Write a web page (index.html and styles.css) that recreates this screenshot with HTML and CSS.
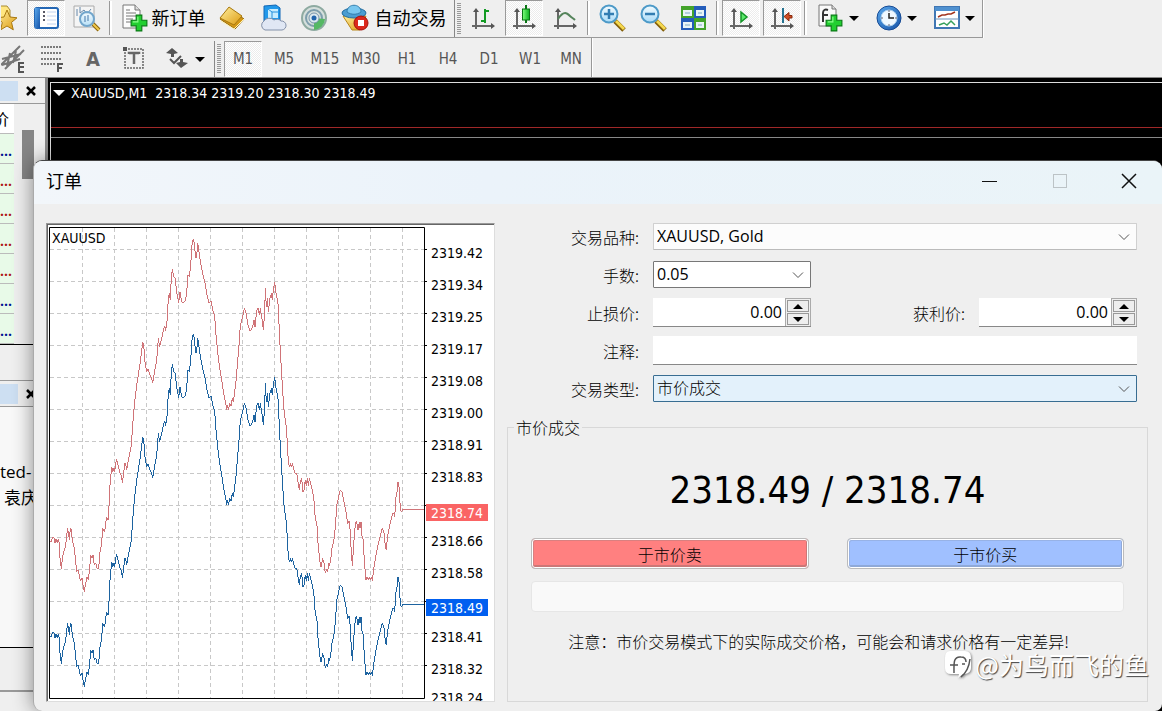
FILE: index.html
```html
<!DOCTYPE html>
<html lang="zh-CN">
<head>
<meta charset="utf-8">
<title>订单</title>
<link rel="stylesheet" href="styles.css">
</head>
<body>
<svg class="defs" aria-hidden="true">
  <defs>
    <linearGradient id="gold" x1="0" y1="0" x2="1" y2="1"><stop offset="0" stop-color="#fff0a0"/><stop offset="1" stop-color="#dd9a10"/></linearGradient>
    <linearGradient id="blue" x1="0" y1="0" x2="1" y2="1"><stop offset="0" stop-color="#5aa8ec"/><stop offset="1" stop-color="#1553a8"/></linearGradient>
    <linearGradient id="glass" x1="0" y1="0" x2="0" y2="1"><stop offset="0" stop-color="#f2fbff"/><stop offset="1" stop-color="#a9dbf8"/></linearGradient>
    <linearGradient id="green" x1="0" y1="0" x2="1" y2="0"><stop offset="0" stop-color="#7dff7d"/><stop offset="1" stop-color="#0cb020"/></linearGradient>
    <symbol id="axes" viewBox="0 0 28 28"><path d="M7 6V25M3 22H24" fill="none" stroke="#666" stroke-width="2"/><path d="M4 8l3-4 3 4zM22 19l4 3-4 3z" fill="#555"/></symbol>
    <symbol id="plus" viewBox="0 0 16 16"><path d="M5.500 1h5v4.500H15v5h-4.500V15h-5v-4.500H1v-5h4.500z" fill="#22cf30" stroke="#087a14"/><path d="M7 2.500V7H2.500" fill="none" stroke="#8dff8d"/></symbol>
    <symbol id="chevron" viewBox="0 0 12 8"><path d="M1 1.500l5 5 5-5" fill="none" stroke="#555"/></symbol>
  </defs>
</svg>

<header class="toolbars">
  <div class="toolbar toolbar-main">
    <button class="tool tool-cut" aria-label="收藏"><svg class="icon" viewBox="0 0 28 28"><path d="M2 2h13l3 4v8H2z" fill="#ffe680" stroke="#a88a30"/><path d="M15 6l3 7 7 .8-5.500 4.600 1.800 7.400L15 22l-6.300 3.800 1.600-7.400L5 13.800l7-.8z" fill="url(#gold)" stroke="#a87810"/></svg></button>
    <button class="tool checked" aria-label="市场报价"><svg class="icon" viewBox="0 0 28 28"><rect x="3" y="4" width="23" height="20" rx="2" fill="#fff" stroke="#2467b4" stroke-width="2"/><path d="M3 4h5v20H3z" fill="url(#blue)"/><path d="M11 8h2M11 12h2M11 16h2" stroke="#223" stroke-width="1.500"/><path d="M15 8h9M15 12h9M15 16h9M15 20h9" stroke="#c4d4ee"/></svg></button>
    <button class="tool" aria-label="数据窗口"><svg class="icon" viewBox="0 0 28 28"><path d="M1 2h20v21H1z" fill="#f5f5f5" stroke="#aaa"/><path d="M4 5v7M7 3v6l4-3 3 4 4-5" fill="none" stroke="#68a"/><path d="M20 20l6 6" stroke="#8a6510" stroke-width="4"/><path d="M20 20l6 6" stroke="#f1c94b" stroke-width="2"/><circle cx="14" cy="15" r="7" fill="url(#glass)" fill-opacity=".8" stroke="#72a6cc" stroke-width="2"/><path d="M12 12v6M15 11v6" stroke="#4779aa"/></svg></button>
    <span class="sep"></span>
    <button class="tool tool-order"><svg class="icon" viewBox="0 0 28 28"><path d="M3 1h12l5 5v18H3z" fill="#fcfcfc" stroke="#777"/><path d="M15 1v5h5" fill="#ddd" stroke="#777"/><path d="M6 6h4M6 9h10M6 12h10M6 15h7M6 18h5" stroke="#777"/><use href="#plus" x="10" y="10" width="18" height="18"/></svg><span>新订单</span></button>
    <button class="tool" aria-label="历史中心"><svg class="icon" viewBox="0 0 28 28"><path d="M2 15L11 4l15 11-9 10z" fill="#d39715" stroke="#94670a"/><path d="M2 14L11 3l13 9-8 9z" fill="url(#gold)" stroke="#a8790f"/><path d="M3 17l13 8 10-10" fill="none" stroke="#fff3b5"/></svg></button>
    <button class="tool" aria-label="云服务"><svg class="icon" viewBox="0 0 28 28"><path d="M5 2l12-1 4 3v13H5z" fill="#2198ea" stroke="#1167b5"/><path d="M9 5h10v9H9z" fill="#c9edff"/><path d="M9 5l4 3v8M13 8h6" fill="none" stroke="#2590dd"/><path d="M6 26a5 5 0 0 1-1-9 6 5 0 0 1 10-1 5 4 0 0 1 7 1 4 4 0 0 1 1 9z" fill="#e0e7f4" stroke="#8391aa"/></svg></button>
    <button class="tool" aria-label="信号"><svg class="icon" viewBox="0 0 28 28"><circle cx="14" cy="14" r="12" fill="#d5dfdc" stroke="#8eaaa1" stroke-width="2"/><circle cx="14" cy="14" r="8" fill="none" stroke="#7e9ead" stroke-width="2"/><path d="M14 14v12a12 12 0 0 0 11-11z" fill="#55b864"/><circle cx="14" cy="14" r="5" fill="#dce9ef" stroke="#7795ac"/><circle cx="14" cy="14" r="2.500" fill="#2264ac"/></svg></button>
    <button class="tool tool-auto"><svg class="icon" viewBox="0 0 28 28"><path d="M2 12l9 14h8l6-14z" fill="url(#gold)" stroke="#b88618"/><ellipse cx="13" cy="9" rx="12" ry="5" fill="#4b9dd1" stroke="#236c9f"/><path d="M6 8c0-9 14-9 14 0-4 3-10 3-14 0z" fill="#79c7ef" stroke="#347eae"/><circle cx="20" cy="19" r="7" fill="#dc281c" stroke="#a41109"/><path d="M17 16h6v6h-6z" fill="#fff"/></svg><span>自动交易</span></button>
    <span class="edge"></span><span class="grip"></span>
    <button class="tool" aria-label="柱状图"><svg class="icon" viewBox="0 0 28 28"><use href="#axes"/><path d="M16 5v14M12 17h4M16 7h4" fill="none" stroke="#139b24" stroke-width="2"/></svg></button>
    <button class="tool checked" aria-label="蜡烛图"><svg class="icon" viewBox="0 0 28 28"><use href="#axes"/><path d="M16 1v18" stroke="#087514" stroke-width="2"/><rect x="12.500" y="5" width="7" height="11" fill="url(#green)" stroke="#087514"/></svg></button>
    <button class="tool" aria-label="折线图"><svg class="icon" viewBox="0 0 28 28"><use href="#axes"/><path d="M7 15c6-9 9-6 12-3 2 2 3 2 5 4" fill="none" stroke="#55845b" stroke-width="2"/></svg></button>
    <span class="sep"></span>
    <button class="tool" aria-label="放大"><svg class="icon" viewBox="0 0 28 28"><path d="M17 17l9 9" stroke="#856009" stroke-width="5"/><path d="M18 17l8 8" stroke="#f5d84f" stroke-width="3"/><circle cx="11" cy="10" r="8.500" fill="url(#glass)" stroke="#4d9ac8" stroke-width="2"/><path d="M6 10h10M11 5v10" stroke="#327db2" stroke-width="2.500"/></svg></button>
    <button class="tool" aria-label="缩小"><svg class="icon" viewBox="0 0 28 28"><path d="M17 17l9 9" stroke="#856009" stroke-width="5"/><path d="M18 17l8 8" stroke="#f5d84f" stroke-width="3"/><circle cx="11" cy="10" r="8.500" fill="url(#glass)" stroke="#4d9ac8" stroke-width="2"/><path d="M6 10h10" stroke="#327db2" stroke-width="2.500"/></svg></button>
    <button class="tool" aria-label="平铺窗口"><svg class="icon" viewBox="0 0 28 28"><path d="M1 2h13v12H1zM14 14h12v12H14z" fill="#43a32b"/><path d="M14 2h12v12H14zM1 14h13v12H1z" fill="#245dba"/><path d="M3 6h9v6H3zM16 6h8v6h-8zM3 18h9v6H3zM16 18h8v6h-8z" fill="#e9f4f7"/><path d="M5 9h5M18 9h4M5 21h5M18 21h4" stroke="#7daac4"/></svg></button>
    <span class="sep"></span>
    <button class="tool checked" aria-label="自动滚动"><svg class="icon" viewBox="0 0 28 28"><use href="#axes"/><path d="M14 8v10l6-5z" fill="#5be86a" stroke="#129426" stroke-width="1.500"/></svg></button>
    <button class="tool checked" aria-label="图表平移"><svg class="icon" viewBox="0 0 28 28"><use href="#axes"/><path d="M15 4v15" stroke="#267391" stroke-width="2"/><path d="M16 12.500l5-4v3h3v2.500h-3v3z" fill="#cd4d24" stroke="#88290b"/></svg></button>
    <span class="sep"></span>
    <button class="tool tool-drop" aria-label="技术指标"><svg class="icon" viewBox="0 0 28 28"><path d="M2 1h13l4 4v17H2z" fill="#f9f9f9" stroke="#777"/><path d="M15 1v4h4" fill="#ddd" stroke="#777"/><path d="M6 18V9c0-3 2-4 5-3M5 11h6" fill="none" stroke="#333" stroke-width="2"/><use href="#plus" x="8" y="10" width="18" height="18"/></svg><i class="caret"></i></button>
    <button class="tool tool-drop" aria-label="时间周期"><svg class="icon" viewBox="0 0 28 28"><circle cx="14" cy="14" r="12" fill="url(#blue)" stroke="#164a94"/><circle cx="14" cy="14" r="8" fill="#eff8ff" stroke="#a9cfee"/><path d="M14 9v5h5" fill="none" stroke="#222" stroke-width="1.500"/><path d="M14 6v2M14 20v2M6 14h2M20 14h2" stroke="#667"/></svg><i class="caret"></i></button>
    <button class="tool tool-drop" aria-label="模板"><svg class="icon" viewBox="0 0 28 28"><rect x="2" y="3" width="24" height="21" fill="#fff" stroke="#4077b4" stroke-width="2"/><path d="M2 3h24v4H2z" fill="#4f91d0"/><path d="M2 15h24" stroke="#6a94bd"/><path d="M5 13l4-2h3l3-1h3l4-2" fill="none" stroke="#a3351f" stroke-width="1.500"/><path d="M6 21l5-2 3 2 4-4 4 4" fill="none" stroke="#36a05b" stroke-width="1.500"/></svg><i class="caret"></i></button>
  </div>
  <div class="toolbar toolbar-sub">
    <button class="tool tool-channel" aria-label="等距通道"><svg class="icon" viewBox="0 0 28 28"><path d="M0 20L19 1M4 24L23 5M1 14l19-5M1 20l18-6M6 21L9 8M12 18l3-12" fill="none" stroke="#777" stroke-width="2"/><path d="M23 18h-5v9h5M18 22h5" fill="none" stroke="#555" stroke-width="2"/></svg></button>
    <button class="tool" aria-label="斐波那契"><svg class="icon" viewBox="0 0 28 28"><path d="M3 2h21M3 8h21M3 14h21M3 19h14" stroke="#555" stroke-width="1.500" stroke-dasharray="2 1"/><path d="M25 19h-5v8M20 23h4" fill="none" stroke="#555" stroke-width="2"/></svg></button>
    <button class="tool tool-letter">A</button>
    <button class="tool" aria-label="文字标签"><svg class="icon" viewBox="0 0 28 28"><rect x="5" y="4" width="18" height="19" fill="none" stroke="#666" stroke-width="1.500" stroke-dasharray="2 1"/><path d="M3 2h4v4H3z" fill="#555"/><path d="M9 9V8h10v1M14 8v11" fill="none" stroke="#666" stroke-width="2.500"/></svg></button>
    <button class="tool tool-drop" aria-label="箭头"><svg class="icon" viewBox="0 0 28 28"><path d="M3 8l6-5 6 5-4 1v3H8V9zM13 18l5 5 7-5-5-1v-3h-3v3z" fill="#555"/><path d="M7 14l4 4 7-7" fill="none" stroke="#555" stroke-width="2"/></svg><i class="caret"></i></button>
    <span class="edge"></span><span class="grip"></span>
    <button class="tool checked">M1</button>
    <button class="tool">M5</button>
    <button class="tool">M15</button>
    <button class="tool">M30</button>
    <button class="tool">H1</button>
    <button class="tool">H4</button>
    <button class="tool">D1</button>
    <button class="tool">W1</button>
    <button class="tool">MN</button>
  </div>
</header>

<main class="workspace">
  <aside class="side">
    <section class="watch">
      <div class="panel-head"><span class="panel-title"></span><button class="panel-close" aria-label="关闭"><svg width="10" height="10" viewBox="0 0 10 10"><path d="M1 1l8 8M9 1L1 9" stroke="#000" stroke-width="2.500"/></svg></button></div>
      <div class="watch-body">
        <table class="quotes">
          <tr><th>价</th></tr>
          <tr><td>...</td></tr>
          <tr><td class="down">...</td></tr>
          <tr><td class="down">...</td></tr>
          <tr><td class="down">...</td></tr>
          <tr><td class="down">...</td></tr>
          <tr><td>...</td></tr>
          <tr><td>...</td></tr>
        </table>
        <div class="scroll"><div class="thumb"></div></div>
      </div>
    </section>
    <section class="navigator">
      <div class="panel-head"><span class="panel-title"></span><button class="panel-close" aria-label="关闭"><svg width="10" height="10" viewBox="0 0 10 10"><path d="M1 1l8 8M9 1L1 9" stroke="#000" stroke-width="2.500"/></svg></button></div>
      <div class="nav-body"><div>ted-</div><div class="nav-name">袁庆</div></div>
    </section>
    <div class="side-foot"></div>
  </aside>
  <section class="price-chart">
    <div class="chart-title"><i class="caret"></i><span>XAUUSD,M1  2318.34 2319.20 2318.30 2318.49</span></div>
    <div class="ask-line"></div>
    <div class="bid-line"></div>
  </section>
</main>

<section class="dialog" role="dialog" aria-labelledby="dialog-title">
  <div class="titlebar">
    <h1 id="dialog-title">订单</h1>
    <button class="win-btn" aria-label="最小化"><svg width="16" height="16" viewBox="0 0 16 16"><path d="M0 8.500h15" stroke="#111"/></svg></button>
    <button class="win-btn" aria-label="最大化" disabled><svg width="16" height="16" viewBox="0 0 16 16"><rect x="1.500" y="1.500" width="13" height="13" fill="none" stroke="#bcc3c6"/></svg></button>
    <button class="win-btn" aria-label="关闭窗口"><svg width="16" height="16" viewBox="0 0 16 16"><path d="M1 1l14 14M15 1L1 15" stroke="#111" stroke-width="1.500"/></svg></button>
  </div>
  <div class="dialog-body">
    <div class="tick-frame">
      <svg class="tick-chart" width="445" height="476" viewBox="48 225 445 476">
        <g class="grid">
          <path d="M82.500 228V698M114.500 228V698M146.500 228V698M178.500 228V698M210.500 228V698M242.500 228V698M274.500 228V698M306.500 228V698M338.500 228V698M370.500 228V698M402.500 228V698"/>
          <path d="M50 249.500H424M50 281.500H424M50 313.500H424M50 345.500H424M50 377.500H424M50 409.500H424M50 441.500H424M50 473.500H424M50 505.500H424M50 537.500H424M50 569.500H424M50 601.500H424M50 633.500H424M50 665.500H424"/>
        </g>
        <defs>
          <polyline id="ticks" transform="translate(40 215) scale(.33333)" points="30,980 34,980 38,965 42,970 45,985 48,972 52,985 55,972 58,985 60,1030 64,1062 67,1030 70,1015 76,995 80,970 82,940 85,950 88,975 91,940 94,945 97,975 102,995 106,1030 110,1070 115,1065 118,1085 122,1098 126,1090 129,1110 133,1130 137,1105 141,1085 145,1095 149,1060 152,1020 156,1030 159,1020 163,1050 167,1045 172,1062 176,1060 180,1010 185,985 188,940 194,950 197,925 200,905 204,915 206,900 209,820 212,790 215,755 218,770 222,760 224,770 229,733 233,745 240,775 244,780 247,803 251,775 254,745 257,745 260,765 264,740 268,720 274,690 278,630 283,570 290,510 298,460 305,410 308,380 312,400 315,440 320,472 324,462 330,480 335,492 338,505 343,475 350,435 355,370 359,395 364,375 370,345 374,332 377,347 381,320 385,250 388,235 391,255 394,185 397,163 401,185 405,190 410,230 416,265 420,232 424,255 428,265 437,255 441,220 444,180 448,185 452,150 456,90 460,72 463,85 467,130 470,125 473,85 477,110 481,140 487,170 495,205 500,235 507,265 513,258 518,285 524,305 528,360 533,410 539,460 545,495 552,540 558,570 560,585 563,570 565,585 569,565 573,572 577,550 580,560 584,530 588,500 592,450 597,390 601,330 608,305 613,280 618,295 624,330 629,347 634,345 638,335 642,315 645,335 650,285 654,280 658,300 661,280 665,305 670,345 674,290 676,220 679,275 682,250 685,290 690,250 694,235 697,255 700,225 704,200 708,235 714,265 716,300 718,350 720,390 724,460 728,530 732,585 738,630 742,680 743,705 745,740 748,757 751,745 754,757 757,745 760,755 764,775 770,775 774,800 778,825 781,800 785,790 789,830 792,825 796,795 799,812 802,790 805,812 808,790 812,805 818,830 823,865 825,900 832,940 834,985 839,1035 843,1055 848,1030 852,1045 856,1075 860,1063 863,1070 866,1045 869,1052 873,1025 877,990 880,985 883,965 887,925 890,870 895,850 900,827 906,830 912,860 918,890 923,927 927,917 930,940 933,995 937,1053 941,990 944,945 949,917 954,945 958,920 960,940 963,920 965,960 969,970 973,1035 976,1075 978,1095 982,1085 985,1095 988,1085 991,1095 994,1085 997,1097 1000,1070 1004,1045 1010,1010 1015,985 1020,965 1027,940 1032,955 1036,995 1039,1005 1042,970 1046,945 1052,920 1058,895 1062,895 1064,905 1068,845 1072,825 1074,802 1077,815 1079,845 1081,883 1084,892 1088,883 1152,883"/>
        </defs>
        <use href="#ticks" class="line-ask"/>
        <use href="#ticks" class="line-bid" y="95"/>
        <path class="plot-frame" d="M49.500 227.500H424.500V698.500H49.500z"/>
        <path class="plot-frame" d="M425 249.500h2M425 281.500h2M425 313.500h2M425 345.500h2M425 377.500h2M425 409.500h2M425 441.500h2M425 473.500h2M425 505.500h2M425 537.500h2M425 569.500h2M425 601.500h2M425 633.500h2M425 665.500h2"/>
        <rect class="tag-ask" x="426" y="504" width="62" height="17"/>
        <rect class="tag-bid" x="426" y="599" width="62" height="17"/>
        <g class="scale">
          <text x="52" y="243" class="symbol">XAUUSD</text>
          <text x="431" y="258">2319.42</text>
          <text x="431" y="290">2319.34</text>
          <text x="431" y="322">2319.25</text>
          <text x="431" y="354">2319.17</text>
          <text x="431" y="386">2319.08</text>
          <text x="431" y="418">2319.00</text>
          <text x="431" y="450">2318.91</text>
          <text x="431" y="482">2318.83</text>
          <text x="431" y="518" class="on-tag">2318.74</text>
          <text x="431" y="546">2318.66</text>
          <text x="431" y="578">2318.58</text>
          <text x="431" y="613" class="on-tag">2318.49</text>
          <text x="431" y="642">2318.41</text>
          <text x="431" y="674">2318.32</text>
          <text x="431" y="703">2318.24</text>
        </g>
      </svg>
    </div>
    <form class="order">
      <div class="fields">
        <div class="row">
          <label for="symbol">交易品种:</label>
          <div class="combo grow"><select id="symbol" class="light"><option>XAUUSD, Gold</option></select><svg class="chevron"><use href="#chevron"/></svg></div>
        </div>
        <div class="row">
          <label for="volume">手数:</label>
          <div class="combo short"><select id="volume"><option>0.05</option></select><svg class="chevron"><use href="#chevron"/></svg></div>
        </div>
        <div class="row">
          <label for="sl">止损价:</label>
          <div class="spin"><input id="sl" type="text" value="0.00"><span class="spin-btns"><button type="button" aria-label="增加"><i class="up"></i></button><button type="button" aria-label="减少"><i class="dn"></i></button></span></div>
          <label for="tp" class="second">获利价:</label>
          <div class="spin"><input id="tp" type="text" value="0.00"><span class="spin-btns"><button type="button" aria-label="增加"><i class="up"></i></button><button type="button" aria-label="减少"><i class="dn"></i></button></span></div>
        </div>
        <div class="row">
          <label for="comment">注释:</label>
          <input id="comment" class="comment grow" type="text">
        </div>
        <div class="row">
          <label for="type">交易类型:</label>
          <div class="combo grow"><select id="type" class="focused"><option>市价成交</option></select><svg class="chevron"><use href="#chevron"/></svg></div>
        </div>
      </div>
      <fieldset class="market">
        <legend>市价成交</legend>
        <div class="quote">2318.49 / 2318.74</div>
        <div class="actions">
          <button type="button" class="deal sell">于市价卖</button>
          <button type="button" class="deal buy">于市价买</button>
        </div>
        <div class="status"></div>
        <p class="note">注意：市价交易模式下的实际成交价格，可能会和请求价格有一定差异!</p>
      </fieldset>
    </form>
  </div>
  <div class="watermark"><svg width="28" height="30" viewBox="0 0 28 30"><path d="M6 2h15q6 0 6 7v10q0 5-6 6h-2l-5 4 1-4H7q-6 0-6-6V9q0-7 5-7z" fill="#fff"/><path d="M6 16h8M10 24c0-9-1-17 7-16 3 0 5 2 5 5M18 15h3M17 28c5-4 8-9 9-18" fill="none" stroke="#555" stroke-width="1.500"/></svg><span>@为鸟而飞的鱼</span></div>
</section>
</body>
</html>
```
FILE: styles.css
```css
* { box-sizing: border-box; }

:root {
  --ui: "DejaVu Sans Condensed", "Noto Sans", "Noto Sans CJK SC", sans-serif;
  --text: "Open Sans", "Noto Sans CJK SC", sans-serif;
  --face: #efefef;
}

body {
  margin: 0;
  min-height: 100vh;
  display: flex;
  flex-direction: column;
  position: relative;
  overflow: hidden;
  background: var(--face);
  font: 14px/20px var(--ui);
  color: #000;
}

.defs { position: absolute; width: 0; height: 0; }
button, input, select { font: inherit; color: inherit; margin: 0; }

/* toolbars */
.toolbar {
  display: flex;
  width: fit-content;
  gap: 3px;
  border-right: 1px solid #999;
  box-shadow: 1px 0 #fff;
}
.toolbar-main { height: 38px; border-bottom: 1px solid #999; padding-right: 1px; }
.toolbar-sub { height: 39px; padding: 3px 1px 0 0; }
.toolbars { border-bottom: 1px solid #888; }

.tool {
  width: 38px;
  height: 36px;
  padding: 0;
  border: 1px solid transparent;
  background: none;
  display: flex;
  align-items: center;
  justify-content: center;
  flex: none;
  font-size: 15px;
  color: #555;
}
.tool.checked {
  border-color: #999 #fff #fff #999;
  background: repeating-conic-gradient(#ececec 0 25%, #fff 0 50%) 0 0 / 2px 2px;
}
.icon { width: 28px; height: 28px; flex: none; }
.tool-cut { width: 24px; justify-content: flex-end; overflow: hidden; padding-right: 3px; }
.tool-order, .tool-auto { font: 18px/24px "Noto Sans CJK SC", sans-serif; color: #000; gap: 4px; }
.tool-order span, .tool-auto span { padding-bottom: 2px; }
.tool-order { width: 95px; }
.tool-auto { width: 115px; gap: 6px; }
.tool-drop { width: 55px; gap: 4px; }
.tool-channel { width: 30px; justify-content: flex-start; }
.tool-letter { font-size: 20px; font-weight: bold; color: #666; }
.sep { width: 3px; border-left: 1px solid #999; background: #fff; background-clip: content-box; margin: 1px 0 2px; }
.edge { width: 1px; background: #888; }
.grip { width: 4px; margin: 3px 0 3px -1px; background: repeating-linear-gradient(#999 0 1px, transparent 1px 2px); }
.caret { width: 0; height: 0; border: 5px solid transparent; border-top-color: #000; border-bottom: 0; }

/* workspace behind the dialog */
.workspace { flex: 1; display: flex; }
.side { width: 48px; border-right: 3px solid #888; background: var(--face); display: flex; flex-direction: column; }
.watch { height: 267px; border-bottom: 1px solid #000; }
.navigator { height: 268px; margin-top: 35px; border-top: 1px solid #999; border-bottom: 1px solid #000; background: #f8f8f8; }
.side-foot { height: 44px; border-bottom: 1px solid #999; box-shadow: inset 0 -8px 0 -7px #999; }
.panel-head { display: flex; height: 26px; padding-top: 3px; background: var(--face); border-bottom: 1px solid #999; }
.panel-title { width: 18px; height: 20px; background: #cddff2; }
.panel-close { width: 26px; padding: 0 0 2px; border: 0; background: none; display: grid; place-items: center; }
.watch-body { display: flex; }
.quotes { border-spacing: 0; width: 14px; table-layout: fixed; font: bold 14px/16px var(--text); color: #001090; }
.quotes td, .quotes th { height: 30px; padding: 0; border-bottom: 1px solid #bbb; direction: rtl; overflow: hidden; white-space: nowrap; background: #e8fae8; }
.quotes th { background: #fff; font-weight: 400; font-size: 16px; color: #000; padding-right: 5px; }
.quotes td { direction: ltr; padding-top: 5px; }
.quotes .down { color: #b01515; }
.scroll { width: 20px; padding: 26px 0 0 8px; }
.thumb { height: 49px; background: #858585; }
.nav-body { padding-top: 52px; font: 17px/26px var(--text); overflow: hidden; white-space: nowrap; }
.nav-name { padding-left: 4px; }

.price-chart { flex: 1; background: #000; border-top: 3px solid #000; color: #fff; box-shadow: inset 2px 1px #000, inset 3px 2px #ddd; padding: 2px 0 0 3px; min-width: 0; }
.chart-title { display: flex; align-items: center; height: 20px; padding-left: 2px; gap: 6px; white-space: pre; overflow: hidden; }
.chart-title .caret { border-width: 6px 6px 0; border-top-color: #fff; }
.ask-line { height: 25px; border-bottom: 1px solid #a02828; }
.bid-line { height: 10px; border-bottom: 1px solid #888; }

/* order dialog */
.dialog {
  position: absolute;
  left: 33px;
  right: 0;
  top: 160px;
  bottom: 0;
  display: flex;
  flex-direction: column;
  background: var(--face);
  border-radius: 9px 9px 7px 9px;
  border-top: 1px solid #444;
  border-left: 1px solid #aaa;
  box-shadow: 0 0 20px rgba(0, 0, 0, .45);
  overflow: hidden;
}
.titlebar { display: flex; height: 43px; flex: none; align-items: stretch; padding: 0 0 3px 12px; background: linear-gradient(90deg, #f2f6fa, #ebf3fa 40%, #eaf4f8); }
.titlebar h1 { flex: 1; margin: 0; font: 400 18px/38px "Noto Sans CJK SC", sans-serif; }
.win-btn { width: 70px; padding: 0; border: 0; background: none; display: grid; place-items: center; }
.win-btn:last-child { width: 67px; }
.dialog-body { flex: 1; display: flex; gap: 12px; padding: 19px 14px 9px 12px; min-height: 0; }
.tick-frame { border: 1px solid; border-color: #999 #ddd #ddd #999; padding: 1px; background: #fff; box-shadow: inset 1px 1px #666; overflow: hidden; flex: none; }
.tick-chart { display: block; }
.grid { stroke: #c8c8c8; stroke-dasharray: 4 3; fill: none; shape-rendering: crispEdges; }
.line-ask, .line-bid { fill: none; stroke-width: 3px; shape-rendering: crispEdges; }
.line-ask { stroke: #d07478; }
.line-bid { stroke: #1d63a0; }
.plot-frame { fill: none; stroke: #000; }
.scale { font: 14px var(--ui); }
.tag-ask { fill: #fa6464; }
.tag-bid { fill: #005ff0; }
.on-tag { fill: #fff; }

.order { flex: 1; display: flex; flex-direction: column; min-width: 0; font: 16px/24px "Noto Sans CJK SC", sans-serif; }
.fields { display: flex; flex-direction: column; gap: 11px; padding-right: 11px; }
.row { display: flex; height: 27px; align-items: center; gap: 11px; }
.row label { width: 135px; text-align: right; padding: 1px 3px 0 0; font-weight: 300; }
.row .second { margin-left: auto; width: auto; }
.grow { flex: 1; }
.combo { position: relative; height: 27px; }
.short, .spin { width: 158px; }
.combo select {
  appearance: none;
  width: 100%;
  height: 27px;
  padding: 0 24px 1px 3px;
  border: 1px solid #777;
  border-radius: 1px;
  background: #fff;
  font-family: var(--text);
}
.combo .light { background: #fcfcfc; border-color: #d0d0d0 #d0d0d0 #bbb; }
.combo .focused { background: #e3f1fb; border-color: #386d92; font-weight: 300; }
.chevron { position: absolute; right: 7px; top: 10px; width: 12px; height: 8px; pointer-events: none; }
.spin { display: flex; height: 29px; border-bottom: 1px solid #888; }
.spin input { flex: 1; min-width: 0; border: 0; background: #fff; text-align: right; padding: 0 3px 1px; font-family: var(--text); }
.spin-btns { width: 26px; padding: 1px; display: flex; flex-direction: column; gap: 1px; border: 1px solid #aaa; border-bottom: 0; }
.spin-btns button { flex: 1; padding: 0; border: 1px solid #999; background: #eee; display: grid; place-items: center; min-height: 0; }
.up, .dn { border: 5px solid transparent; }
.up { border-top: 0; border-bottom-color: #000; }
.dn { border-bottom: 0; border-top-color: #000; }
.comment { height: 29px; border: 0; border-bottom: 1px solid #888; background: #fff; font-family: var(--text); }

.market { flex: 1; margin: 13px 0 0; padding: 29px 23px 0; border: 1px solid #d8d8d8; min-width: 0; font-weight: 300; }
.market legend { margin-left: -17px; padding: 0 2px; line-height: 24px; }
.quote { font: 38px/44px var(--ui); text-align: center; }
.actions { display: flex; gap: 38px; margin-top: 26px; }
.deal { flex: 1; height: 31px; padding: 0; border: 1px solid #bbb; border-radius: 4px; font-weight: 300; line-height: 26px; }
.sell { background: #ff8080; box-shadow: inset 0 0 0 1px #fff, inset -1px -2px 0 1px #cc7777, inset 1px 1px 0 1px #d98080; }
.buy { background: #a0c0ff; box-shadow: inset 0 0 0 1px #fff, inset -1px -2px 0 1px #8fa9d8, inset 1px 1px 0 1px #97b2e6; }
.status { height: 31px; margin-top: 12px; border: 1px solid #e6e6e6; border-radius: 4px; background: #f9f9f9; }
.note { margin: 17px 0 0; padding-right: 18px; text-align: center; white-space: nowrap; }

.watermark { position: absolute; right: 13px; bottom: 29px; display: flex; align-items: center; gap: 3px; font: 400 25px/36px "Noto Sans CJK SC", sans-serif; color: #fff; text-shadow: 1px 1px 1px #444; }
.watermark svg { filter: drop-shadow(1px 1px 1px #888); }
```
